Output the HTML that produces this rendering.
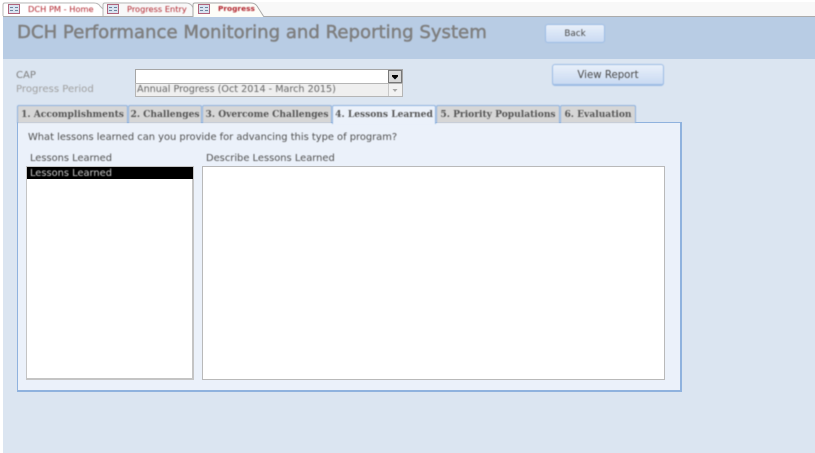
<!DOCTYPE html>
<html>
<head>
<meta charset="utf-8">
<style>
html,body{margin:0;padding:0;background:#fff}
#p{position:relative;width:815px;height:453px;overflow:hidden;background:#fff;font-family:"DejaVu Sans","Liberation Sans",sans-serif;}
#p div{position:absolute;box-sizing:border-box;white-space:nowrap}
.t{filter:blur(.4px)}
.tab{top:105px;height:18px;background:#d6d6d6;border:1px solid #8fb2de;border-bottom:none;border-radius:2px 2px 0 0;font:bold 9.100px/18px "DejaVu Serif","Liberation Serif",serif;color:#555;text-align:center;overflow:hidden}
.btn{background:linear-gradient(#e9f0fa,#c9daf2);border:1px solid #9dbce4;border-radius:3px;color:#4a4a4a;text-align:center}
.dt{font-size:8.250px;color:#b1252e;line-height:12px;top:3px}
</style>
</head>
<body>
<div id="p">
  <!-- tab strip -->
  <div style="left:3px;top:2px;width:812px;height:14px;background:#f8f8f8"></div>
  <div style="left:3px;top:16px;width:812px;height:1px;background:#ababab"></div>

  <svg style="position:absolute;left:0;top:0" width="280" height="18">
    <path d="M3 16V5Q3 3 5 3H94Q98 3 100 6L110 16" fill="#fff" stroke="#b8b8b8"/>
    <path d="M103 16V5Q103 3 105 3H186Q190 3 192 6L198 16" fill="#f8f8f8" stroke="#b8b8b8"/>
    <path d="M193 17V5Q193 3 195 3H251Q255 3 257 6L264 17" fill="#fdfdf8" stroke="#a9a9a9"/>
    <g fill="#d9e3f0" stroke="#b0637c">
      <rect x="8.5" y="4.5" width="11" height="9"/>
      <rect x="107.500" y="4.500" width="11" height="9"/>
      <rect x="198.500" y="4.500" width="11" height="9"/>
    </g>
    <g stroke="#6d84a0" stroke-width="1">
      <path d="M10 7.500H13M15 7.500H18M10 10.500H13M15 10.500H18"/>
      <path d="M109 7.500H112M114 7.500H117M109 10.500H112M114 10.500H117"/>
      <path d="M200 7.500H203M205 7.500H208M200 10.500H203M205 10.500H208"/>
    </g>
  </svg>
  <div class="t dt" style="left:28px">DCH PM - Home</div>
  <div class="t dt" style="left:127px">Progress Entry</div>
  <div class="t dt" style="left:218px;font-weight:bold;font-size:7.400px">Progress</div>

  <!-- header -->
  <div style="left:3px;top:17px;width:812px;height:42px;background:#b8cce4"></div>
  <div class="t" style="left:17px;top:22px;font-size:18.100px;line-height:22px;color:#7f7f7f;font-weight:400;-webkit-text-stroke:.5px #7f7f7f">DCH Performance Monitoring and Reporting System</div>
  <div class="btn t" style="left:545px;top:24px;width:60px;height:19px;font-size:8.800px;line-height:18px">Back</div>

  <!-- body -->
  <div style="left:3px;top:59px;width:812px;height:394px;background:#dbe5f1"></div>

  <div class="t" style="left:16px;top:69px;font-size:10px;line-height:13px;color:#7f7f7f">CAP</div>
  <div class="t" style="left:16px;top:82px;font-size:10.100px;line-height:15px;color:#a0a0a0">Progress Period</div>

  <div style="left:135px;top:69px;width:268px;height:15px;background:#fff;border:1px solid #a6a6a6"></div>
  <div style="left:388px;top:70px;width:14px;height:13px;background:#d8d8d8;border:1px solid #777"></div>
  <svg style="position:absolute;left:388px;top:70px" width="14" height="13"><path d="M4 5H10V6.500L7 9.500L4 6.500Z" fill="#000"/></svg>

  <div style="left:135px;top:83px;width:268px;height:14px;background:#efefef;border:1px solid #b5b5b5"></div>
  <div style="left:388px;top:84px;width:14px;height:12px;background:#f2f2f2;border-left:1px solid #c8c8c8"></div>
  <svg style="position:absolute;left:388px;top:84px" width="14" height="12"><path d="M4.500 5H9.500L7 8Z" fill="#a8a8a8"/></svg>
  <div class="t" style="left:137px;top:83px;font-size:9.650px;line-height:14px;color:#666">Annual Progress (Oct 2014 - March 2015)</div>

  <div class="btn t" style="left:552px;top:64px;width:112px;height:22px;font-size:10.200px;line-height:21px;border-width:1px 1px 2px;">View Report</div>

  <!-- tab panel -->
  <div style="left:17px;top:122px;width:665px;height:270px;background:#ebf1fa;border:1px solid #8fb2de;border-right-width:2px;border-bottom-width:2px"></div>

  <div class="tab t" style="left:17px;width:111px">1. Accomplishments</div>
  <div class="tab t" style="left:128px;width:74px">2. Challenges</div>
  <div class="tab t" style="left:202px;width:130px">3. Overcome Challenges</div>
  <div class="tab t" style="left:332px;top:105px;width:104px;height:19px;background:#ebf1fa;">4. Lessons Learned</div>
  <div class="tab t" style="left:436px;width:124px">5. Priority Populations</div>
  <div class="tab t" style="left:560px;width:76px">6. Evaluation</div>

  <div class="t" style="left:28px;top:131px;font-size:9.890px;line-height:13px;color:#505050">What lessons learned can you provide for advancing this type of program?</div>
  <div class="t" style="left:30px;top:152px;font-size:9.860px;line-height:13px;color:#505050">Lessons Learned</div>
  <div class="t" style="left:206px;top:152px;font-size:9.880px;line-height:13px;color:#505050">Describe Lessons Learned</div>

  <div style="left:26px;top:166px;width:168px;height:214px;background:#fff;border:1px solid #c4c4c4;border-width:1px 2px 2px 1px"></div>
  <div style="left:27px;top:167px;width:166px;height:12px;background:#000"></div>
  <div class="t" style="left:30px;top:168px;font-size:9.860px;line-height:12px;color:#c9c9c9">Lessons Learned</div>

  <div style="left:202px;top:166px;width:463px;height:214px;background:#fff;border:1px solid #b9b9b9"></div>
</div>
</body>
</html>
